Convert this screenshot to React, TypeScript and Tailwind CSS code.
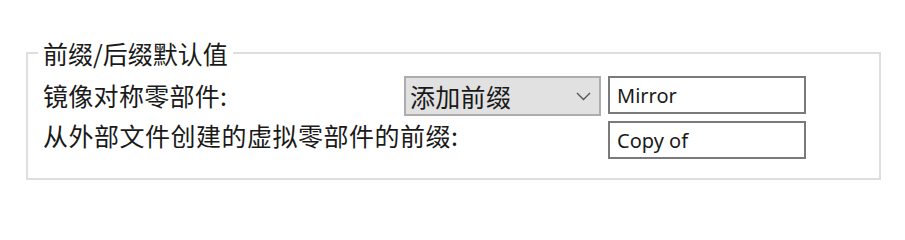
import React from 'react';

// Windows-style group box: 前缀/后缀默认值
const TextBox = ({ value }: { value: string }) => (
  <input
    type="text"
    defaultValue={value}
    className="h-[38px] w-[198px] border-2 border-[#7a7a7a] bg-white pl-[7px] font-['Noto_Sans',sans-serif] text-[20px] text-[#1a1a1a] outline-none"
  />
);

const App = () => {
  return (
    <div className="h-[213px] w-[905px] bg-white pl-[26px] pt-[41px] font-['Noto_Sans_CJK_SC','Noto_Sans',sans-serif] text-[25px] leading-[24px] text-[#1a1a1a]">
      <fieldset className="w-[855px] border-2 border-[#dedede] pb-[19px] pl-[10px]">
        <legend className="px-[5px]">前缀/后缀默认值</legend>
        <div className="mt-[11px] grid grid-cols-[354px_197px_198px] gap-x-[7px] gap-y-[5px] pl-[5px]">
          <div className="mt-[7px] self-start tracking-[0.3px]">镜像对称零部件:</div>
          <div className="flex h-[40px] items-center justify-between border-2 border-[#adadad] bg-[#e1e1e1] pl-[4px] pr-[8px]">
            <span className="tracking-[0.3px]">添加前缀</span>
            <svg width="15" height="9" viewBox="0 0 15 9" fill="none">
              <path d="M1 1l6.5 6.5L14 1" stroke="#555" strokeWidth="1.4" />
            </svg>
          </div>
          <TextBox value="Mirror" />
          <div className="col-span-2 mt-[2px] self-start whitespace-nowrap tracking-[0.5px]">
            从外部文件创建的虚拟零部件的前缀:
          </div>
          <TextBox value="Copy of" />
        </div>
      </fieldset>
    </div>
  );
};

export default App;
